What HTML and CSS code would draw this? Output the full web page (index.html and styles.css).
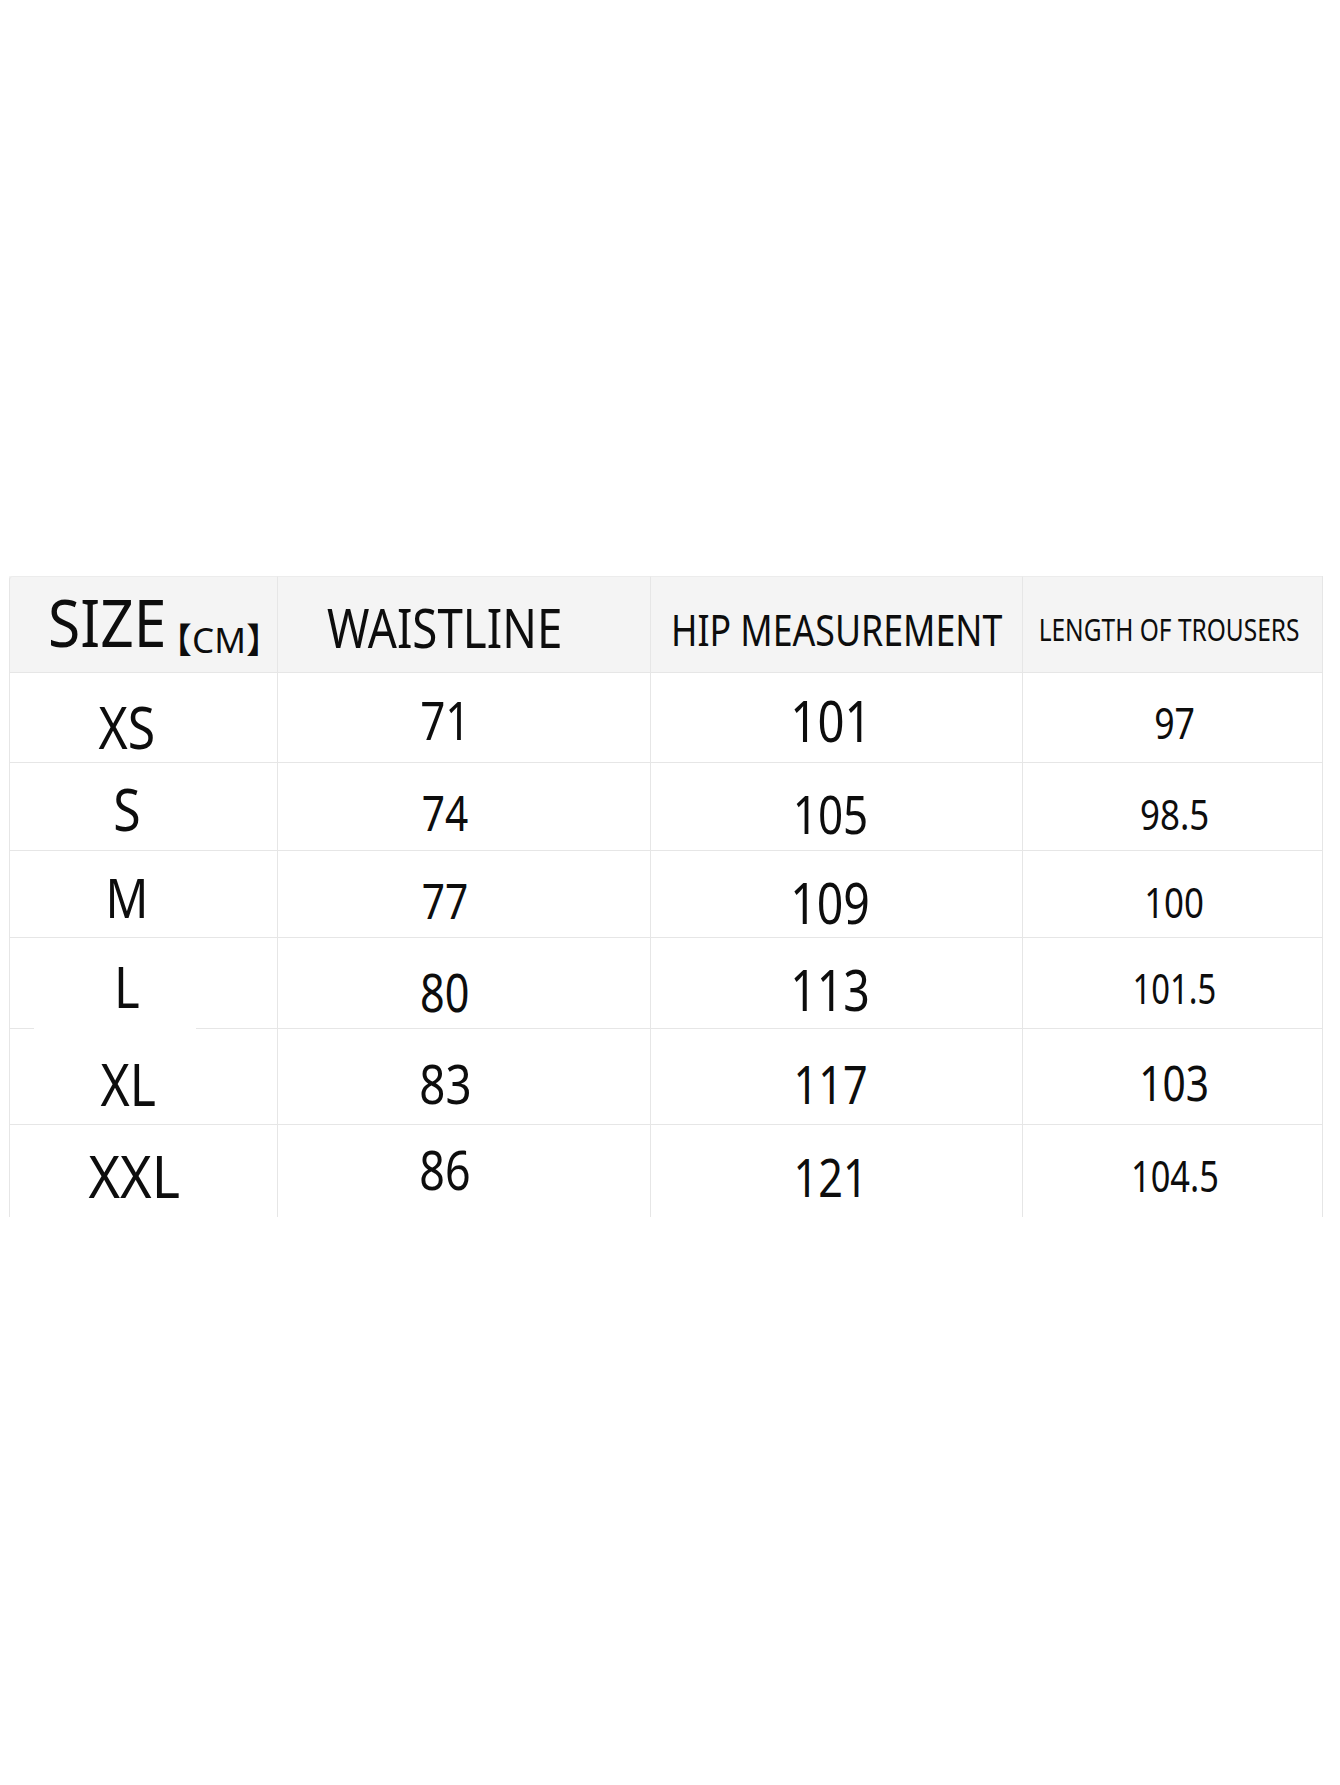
FILE: index.html
```html
<!DOCTYPE html>
<html lang="en">
<head>
<meta charset="utf-8">
<title>Size chart</title>
<link rel="stylesheet" href="styles.css">
</head>
<body>
<main class="page">
  <div class="chart">
    <div class="row r-head">
      <div class="cell c1"><span class="t size-title">SIZE</span><span class="unit">【CM】</span></div>
      <div class="cell c2"><span class="t">WAISTLINE</span></div>
      <div class="cell c3"><span class="t">HIP MEASUREMENT</span></div>
      <div class="cell c4"><span class="t">LENGTH OF TROUSERS</span></div>
    </div>
    <div class="row r-xs">
      <div class="cell c1"><span class="t">XS</span></div>
      <div class="cell c2"><span class="t">71</span></div>
      <div class="cell c3"><span class="t">101</span></div>
      <div class="cell c4"><span class="t">97</span></div>
    </div>
    <div class="row r-s">
      <div class="cell c1"><span class="t">S</span></div>
      <div class="cell c2"><span class="t">74</span></div>
      <div class="cell c3"><span class="t">105</span></div>
      <div class="cell c4"><span class="t">98.5</span></div>
    </div>
    <div class="row r-m">
      <div class="cell c1"><span class="t">M</span></div>
      <div class="cell c2"><span class="t">77</span></div>
      <div class="cell c3"><span class="t">109</span></div>
      <div class="cell c4"><span class="t">100</span></div>
    </div>
    <div class="row r-l">
      <div class="cell c1"><span class="t">L</span></div>
      <div class="cell c2"><span class="t">80</span></div>
      <div class="cell c3"><span class="t">113</span></div>
      <div class="cell c4"><span class="t">101.5</span></div>
    </div>
    <div class="row r-xl">
      <div class="cell c1"><span class="t">XL</span></div>
      <div class="cell c2"><span class="t">83</span></div>
      <div class="cell c3"><span class="t">117</span></div>
      <div class="cell c4"><span class="t">103</span></div>
    </div>
    <div class="row r-xxl">
      <div class="cell c1"><span class="t">XXL</span></div>
      <div class="cell c2"><span class="t">86</span></div>
      <div class="cell c3"><span class="t">121</span></div>
      <div class="cell c4"><span class="t">104.5</span></div>
    </div>
  </div>
</main>
</body>
</html>
```

FILE: styles.css
```css
html, body {
  margin: 0;
  padding: 0;
  background: #ffffff;
}

.page {
  width: 1340px;
  height: 1785px;
  padding: 576px 0 0 9px;
  box-sizing: border-box;
}

.chart {
  width: 1314px;
  border-right: 1px solid #e6e6e6;
  border-top-left-radius: 4px;
  box-sizing: border-box;
  font-family: "Noto Sans", "Open Sans", "Liberation Sans", sans-serif;
  color: #0d0d0d;
  line-height: 1;
}

.row {
  display: grid;
  grid-template-columns: 268px 373px 372px 300px;
}

.cell {
  box-sizing: border-box;
  border-left: 1px solid #e6e6e6;
  border-top: 1px solid #e6e6e6;
  display: flex;
  justify-content: center;
  align-items: flex-start;
  white-space: nowrap;
  position: relative;
}

.t {
  display: inline-block;
  transform: scaleX(0.83);
  transform-origin: center top;
}
.c1 .t { transform: scaleX(0.86); }

.c1 { padding-right: 34px; }
.c2 { padding-right: 38px; }
.c3 { padding-right: 12px; }
.c4 { padding-left: 4px; }

/* header */
.r-head { height: 96px; background: #f4f4f4; }
.r-head .cell { border-top-color: #ececec; }
.r-head .c1 {
  justify-content: flex-start;
  padding: 11px 0 0 38px;
  border-top-left-radius: 4px;
}
.r-head .c1 .size-title {
  font-size: 66px;
  transform: scaleX(0.89);
  transform-origin: left top;
}
.unit {
  font-family: "Noto Sans", "Noto Sans CJK SC", sans-serif;
  font-size: 35px;
  margin-left: -24px;
  position: relative;
  top: 34px;
  letter-spacing: 0;
}
.r-head .c2 { font-size: 55px; padding-top: 22px; }
.r-head .c3 { font-size: 43px; padding-top: 31px; padding-right: 0; }
.r-head .c4 { font-size: 31px; padding-top: 37px; padding-left: 0; padding-right: 6px; }
.r-head .c4 .t { transform: scaleX(0.79); }

/* XS */
.r-xs { height: 90px; }
.r-xs .c1 { font-size: 58px; padding-top: 25px; }
.r-xs .c2 { font-size: 53px; padding-top: 20px; }
.r-xs .c3 { font-size: 57px; padding-top: 19px; }
.r-xs .c4 { font-size: 43px; padding-top: 28px; }

/* S */
.r-s { height: 88px; }
.r-s .c1 { font-size: 58px; padding-top: 17px; }
.r-s .c2 { font-size: 49px; padding-top: 25px; }
.r-s .c3 { font-size: 53px; padding-top: 24px; }
.r-s .c4 { font-size: 42px; padding-top: 30px; }

/* M */
.r-m { height: 87px; }
.r-m .c1 { font-size: 55px; padding-top: 18px; }
.r-m .c2 { font-size: 49px; padding-top: 25px; }
.r-m .c3 { font-size: 56px; padding-top: 23px; }
.r-m .c4 { font-size: 42px; padding-top: 30px; }

/* L */
.r-l { height: 91px; }
.r-l .c1 { font-size: 57px; padding-top: 20px; }
.r-l .c2 { font-size: 52px; padding-top: 28px; }
.r-l .c3 { font-size: 56px; padding-top: 23px; }
.r-l .c4 { font-size: 41px; padding-top: 30px; }

/* XL */
.r-xl { height: 96px; }
.r-xl .c1 { font-size: 58px; padding-top: 26px; padding-right: 30px; }
.r-xl .c2 { font-size: 55px; padding-top: 26px; }
.r-xl .c3 { font-size: 52px; padding-top: 29px; }
.r-xl .c4 { font-size: 49px; padding-top: 29px; }
.r-xl .c1::before {
  content: "";
  position: absolute;
  top: -1px;
  left: 24px;
  width: 162px;
  height: 1px;
  background: #ffffff;
}

/* XXL */
.r-xxl { height: 93px; }
.r-xxl .c1 { font-size: 58px; padding-top: 22px; padding-right: 18px; }
.r-xxl .c1 .t { transform: scaleX(0.93); }
.r-xxl .c2 { font-size: 54px; padding-top: 17px; }
.r-xxl .c3 { font-size: 52px; padding-top: 26px; }
.r-xxl .c4 { font-size: 43px; padding-top: 29px; }
.r-xxl .c4 .t { transform: scaleX(0.8); }
.r-l .c4 .t { transform: scaleX(0.8); }
```
